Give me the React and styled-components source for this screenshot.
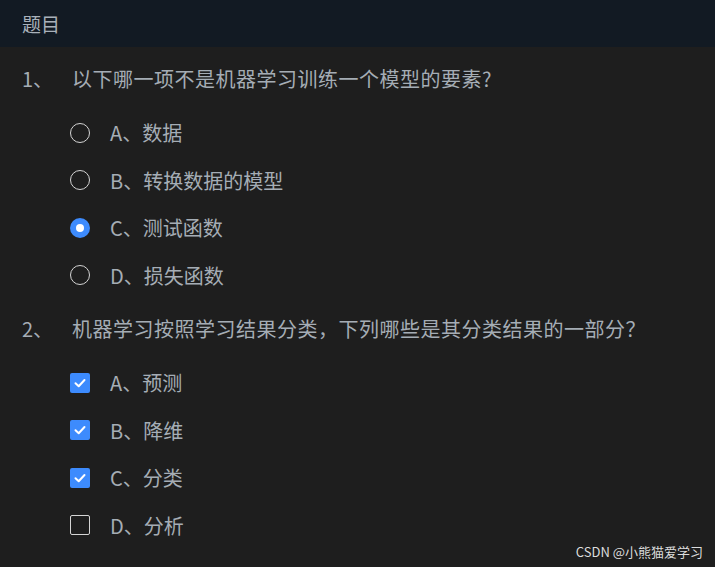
import React from "react";
import styled, { createGlobalStyle } from "styled-components";

const Global = createGlobalStyle`
  html, body { margin: 0; padding: 0; background: #1e1e1e; }
  body { font-family: "Noto Sans CJK SC", "Noto Sans", sans-serif; }
  * { box-sizing: border-box; }
`;

const Page = styled.div`
  position: relative;
  min-height: 100vh;
  background: #1e1e1e;
  color: #a5adb5;
  overflow: hidden;
`;

const Header = styled.div`
  height: 47px;
  background: #121a23;
  padding-left: 22px;
  display: flex;
  align-items: center;
  font-size: 19px;
  color: #a9b1ba;
`;

const Body = styled.div`
  padding-top: 7px;
  display: flex;
  flex-direction: column;
`;

const Block = styled.div`
  display: flex;
  flex-direction: column;
  margin-top: ${(p) => (p.$first ? 0 : 5)}px;
`;

const QTitle = styled.div`
  display: flex;
  align-items: center;
  height: 48px;
  padding-left: 22px;
  font-size: 20px;
`;

const QNum = styled.span`
  width: 50px;
  flex: none;
`;

const QText = styled.span`
  letter-spacing: 0.5px;
`;

const Options = styled.div`
  display: flex;
  flex-direction: column;
  padding-top: 7px;
`;

const Option = styled.label`
  display: flex;
  align-items: center;
  gap: 20px;
  height: 47.5px;
  padding-left: 70px;
  font-size: 20px;
`;

const Radio = styled.span`
  width: 20px;
  height: 20px;
  border-radius: 50%;
  flex: none;
  display: flex;
  align-items: center;
  justify-content: center;
  border: ${(p) => (p.$on ? "none" : "1.5px solid #d4d4d4")};
  background: ${(p) => (p.$on ? "#3d8bfd" : "transparent")};
  &::after {
    content: "";
    display: ${(p) => (p.$on ? "block" : "none")};
    width: 8px;
    height: 8px;
    border-radius: 50%;
    background: #fff;
  }
`;

const Check = styled.span`
  width: 20px;
  height: 20px;
  border-radius: 2px;
  flex: none;
  display: flex;
  align-items: center;
  justify-content: center;
  border: ${(p) => (p.$on ? "none" : "1.5px solid #d4d4d4")};
  background: ${(p) => (p.$on ? "#3d8bfd" : "transparent")};
`;

const Watermark = styled.div`
  position: absolute;
  right: 12px;
  bottom: 6px;
  font-size: 13px;
  color: #dcdcdc;
`;

const CheckMark = () => (
  <svg width="14" height="14" viewBox="0 0 14 14">
    <polyline points="2.5,7.2 5.7,10.2 11.5,4" fill="none" stroke="#fff" strokeWidth="2" strokeLinecap="round" strokeLinejoin="round" />
  </svg>
);

const q1 = ["A、数据", "B、转换数据的模型", "C、测试函数", "D、损失函数"];
const q2 = ["A、预测", "B、降维", "C、分类", "D、分析"];
const q2on = [true, true, true, false];

export default function App() {
  return (
    <Page>
      <Global />
      <Header>题目</Header>
      <Body>
        <Block $first>
          <QTitle>
            <QNum>1、</QNum>
            <QText>以下哪一项不是机器学习训练一个模型的要素?</QText>
          </QTitle>
          <Options>
            {q1.map((t, i) => (
              <Option key={t}>
                <Radio $on={i === 2} />
                <span>{t}</span>
              </Option>
            ))}
          </Options>
        </Block>
        <Block>
          <QTitle>
            <QNum>2、</QNum>
            <QText>机器学习按照学习结果分类，下列哪些是其分类结果的一部分？</QText>
          </QTitle>
          <Options>
            {q2.map((t, i) => (
              <Option key={t}>
                <Check $on={q2on[i]}>{q2on[i] && <CheckMark />}</Check>
                <span>{t}</span>
              </Option>
            ))}
          </Options>
        </Block>
      </Body>
      <Watermark>CSDN @小熊猫爱学习</Watermark>
    </Page>
  );
}
